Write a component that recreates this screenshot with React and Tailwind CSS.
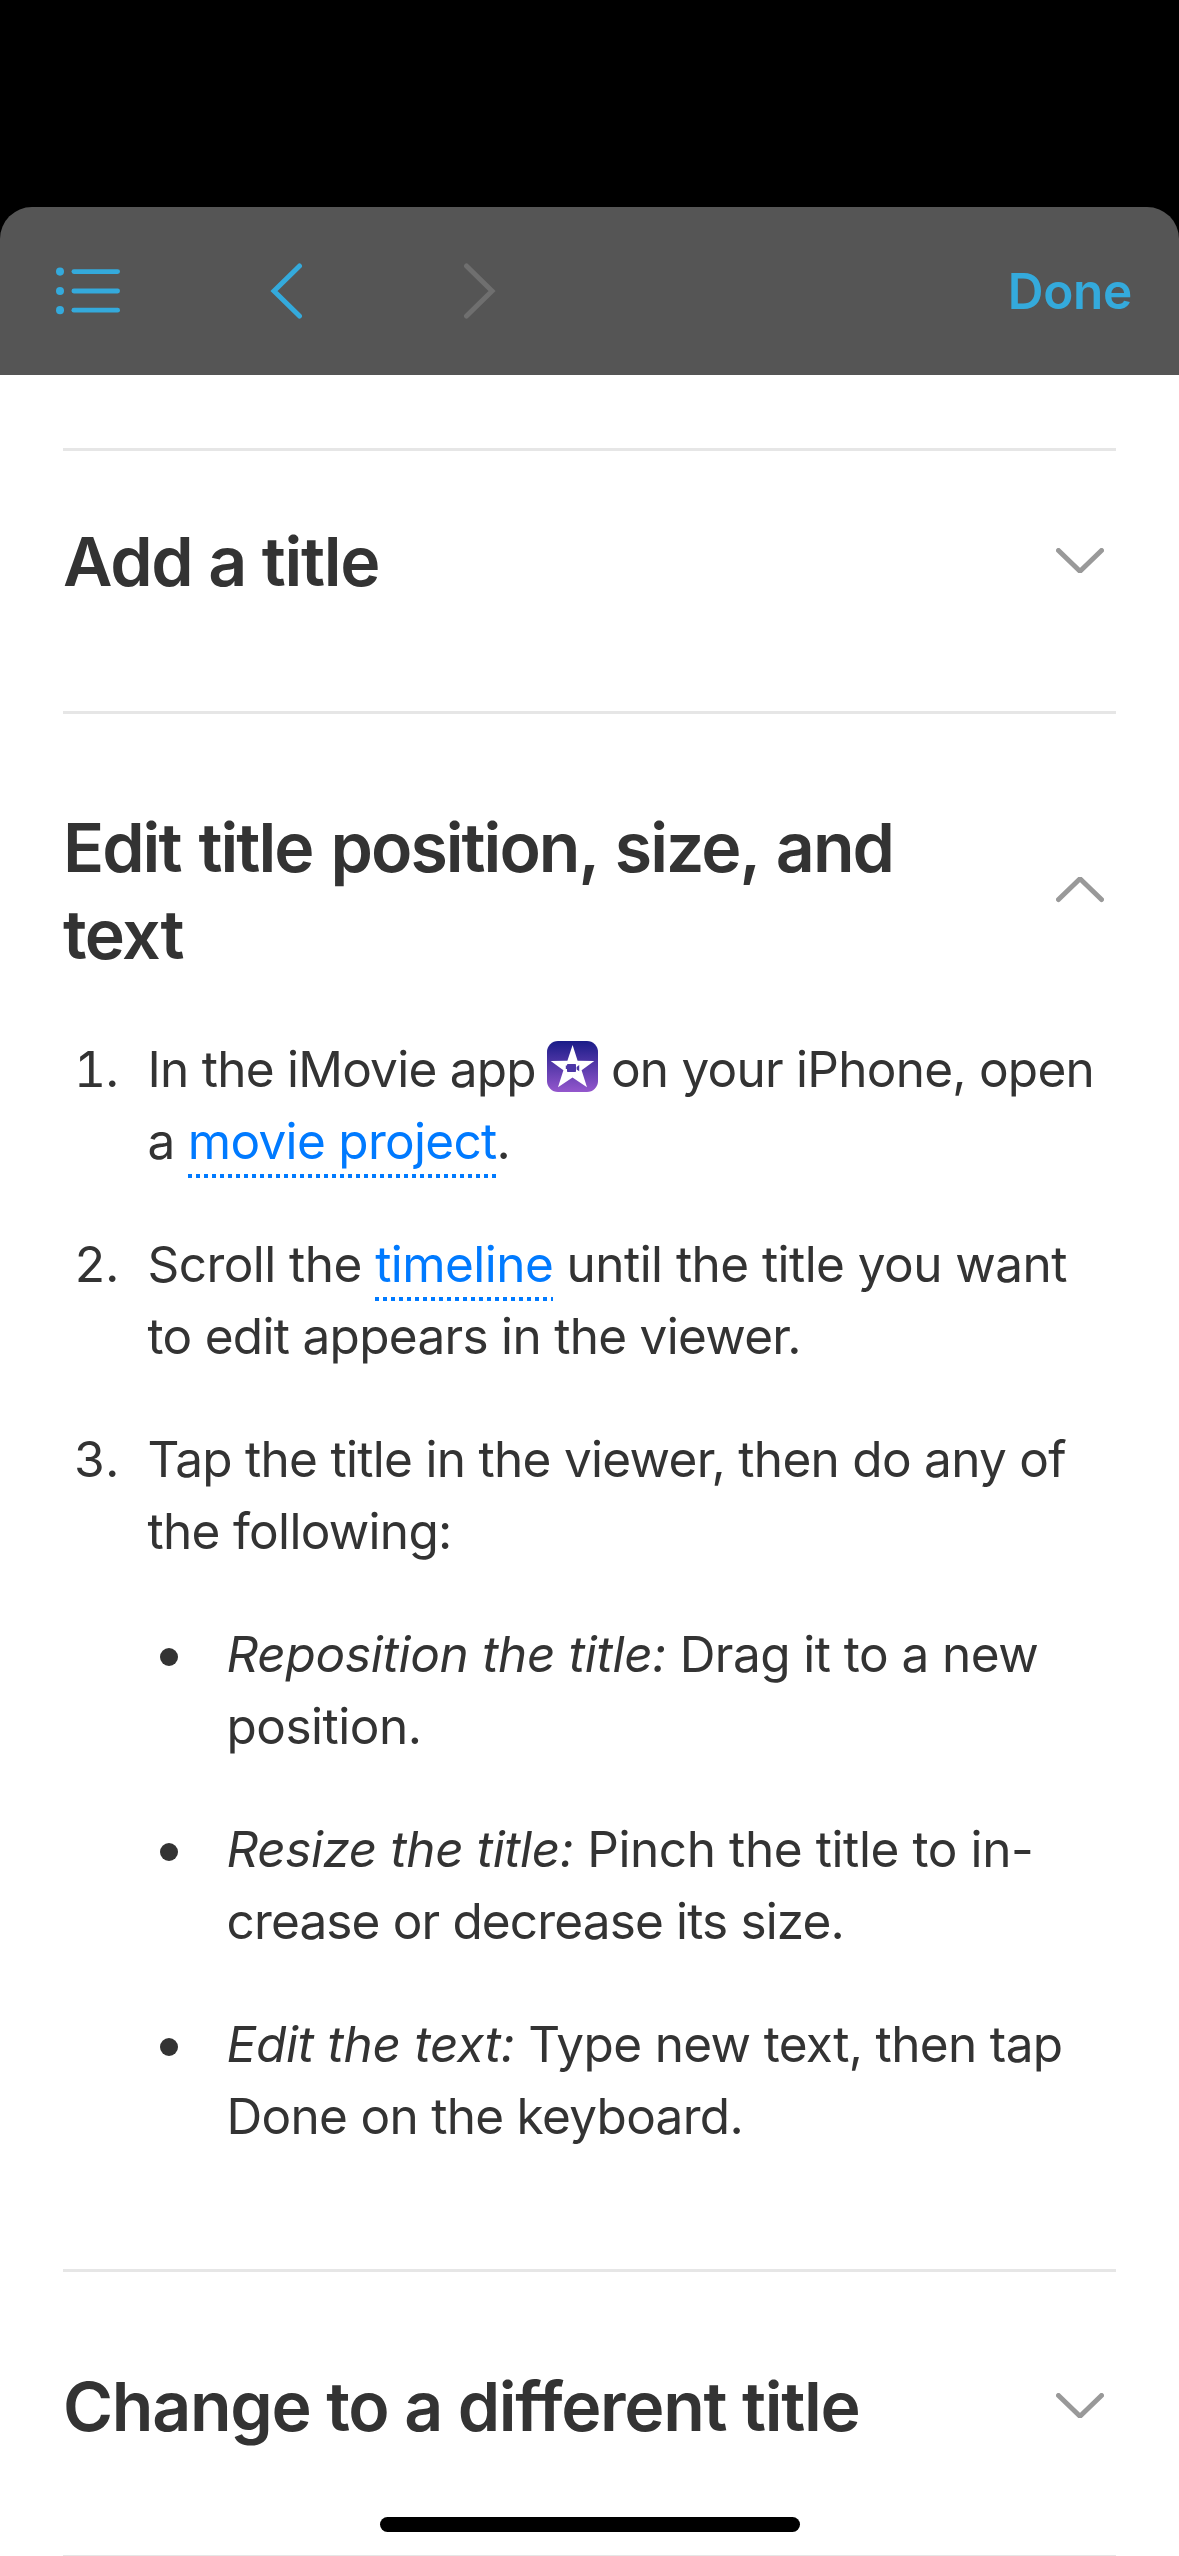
import React, { useState } from 'react';

/**
 * Chevron Component
 * Small gray arrow at the end of a section heading
 */
const Chevron = ({ open }) => (
  <svg
    width="48"
    height="26"
    viewBox="0 0 48 26"
    fill="none"
    stroke="#999999"
    strokeWidth="5"
    strokeLinecap="round"
    strokeLinejoin="bevel"
    className="mr-3 mb-0.5 shrink-0"
  >
    {open ? <path d="M2.5 22.5 L24 1.8 L45.5 22.5" /> : <path d="M2.5 2.5 L24 23.2 L45.5 2.5" />}
  </svg>
);

/**
 * MovieIcon Component
 * Inline app icon: white star with a camera on a purple gradient
 */
const MovieIcon = () => (
  <svg
    width="51"
    height="51"
    viewBox="0 0 51 51"
    className="mr-[13px] ml-[11px] inline-block align-[-5px]"
  >
    <defs>
      <linearGradient id="movie-bg" x1="0" y1="0" x2="0" y2="1">
        <stop offset="0" stopColor="#1a1c88" />
        <stop offset="1" stopColor="#9457cd" />
      </linearGradient>
    </defs>
    <rect width="51" height="51" rx="11" fill="url(#movie-bg)" />
    <path
      d="M25.6 4 L30.6 19.8 L47.3 20 L34.6 29.2 L40 46.3 L25.5 36.6 L11 46.3 L16.4 29.2 L3.7 20 L20.4 19.8 Z"
      fill="#ffffff"
    />
    <rect x="20" y="23" width="9" height="8" rx="0.8" fill="#4c35a6" />
    <path d="M18.8 24.5 h1.2 v3.4 h-1.2 Z M29.6 26 L32.2 24 V30.3 L29.6 28.4 Z" fill="#4c35a6" />
  </svg>
);

const Toolbar = () => (
  <header className="flex h-[168px] items-center rounded-t-[32px] bg-[#555555] pr-[47px] pl-[56px]">
    <button type="button" aria-label="Contents">
      <svg width="64" height="48" viewBox="0 0 64 48" fill="#34aadc">
        <ellipse cx="4" cy="4.6" rx="4" ry="4.1" />
        <ellipse cx="4" cy="24" rx="4" ry="4.1" />
        <ellipse cx="4" cy="43.2" rx="4" ry="4.1" />
        <rect x="15.5" y="2.2" width="48.5" height="4.8" rx="2.4" />
        <rect x="15.5" y="21.6" width="48.5" height="4.8" rx="2.4" />
        <rect x="15.5" y="40.8" width="48.5" height="4.8" rx="2.4" />
      </svg>
    </button>
    <button type="button" aria-label="Back" className="ml-[150px]">
      <svg width="34" height="56" viewBox="0 0 34 56" fill="none" stroke="#34aadc" strokeWidth="5" strokeLinecap="round">
        <path d="M29.5 3 L4 28 L29.5 53" />
      </svg>
    </button>
    <button type="button" aria-label="Forward" className="ml-[158px]">
      <svg width="34" height="56" viewBox="0 0 34 56" fill="none" stroke="#6f6f6f" strokeWidth="5" strokeLinecap="round">
        <path d="M4.5 3 L30 28 L4.5 53" />
      </svg>
    </button>
    <button type="button" className="ml-auto text-[49.5px] font-semibold tracking-[-0.3px] text-[#34aadc]">
      Done
    </button>
  </header>
);

/**
 * Section Component
 * Collapsible help topic
 */
const Section = ({ title, defaultOpen = false, className, children }) => {
  const [open, setOpen] = useState(defaultOpen);

  return (
    <section className={`border-t-3 border-[#e6e6e6] ${className}`}>
      <h2
        onClick={() => setOpen(!open)}
        className="flex items-center justify-between text-[68px] leading-[87px] font-semibold"
      >
        <span>{title}</span>
        <Chevron open={open} />
      </h2>
      {open && children}
    </section>
  );
};

const Line = ({ children, className = '' }) => (
  <span className={`block whitespace-nowrap ${className}`}>{children}</span>
);

const Link = ({ children }) => (
  <a
    href="#"
    className="bg-[linear-gradient(to_right,#007aff_50%,transparent_50%)] bg-[length:8px_4px] bg-bottom-left bg-repeat-x pb-[7px] text-[#007aff]"
  >
    {children}
  </a>
);

const Step = ({ number, children }) => (
  <li className="flex">
    <span className="w-[55px] shrink-0 text-right tabular-nums">{number}.</span>
    <div className="ml-[29.5px]">{children}</div>
  </li>
);

const Bullet = ({ children }) => (
  <li className="flex">
    <span className="mt-[30px] mr-[49px] ml-3 size-[18px] shrink-0 rounded-full bg-[#333333]" />
    <div>{children}</div>
  </li>
);

export default function App() {
  return (
    <div className="relative h-[2556px] w-[1179px] overflow-hidden bg-black pt-[207px] font-[Inter,sans-serif] text-[#333333]">
      <Toolbar />
      <main className="h-[2181px] bg-white px-[63px] pt-[73px]">
        <Section title={<Line className="tracking-[-1.3px]">Add a title</Line>} className="h-[263px] pt-[67px]" />

        <Section
          defaultOpen
          title={
            <>
              <Line className="tracking-[-2px] [word-spacing:3px]">Edit title position, size, and</Line>
              <Line className="tracking-[-1.5px]">text</Line>
            </>
          }
          className="h-[1558px] pt-[90px]"
        >
          <ol className="mt-[55px] flex flex-col gap-[51px] text-[49.5px] leading-[72px] tracking-[-0.7px]">
            <Step number={1}>
              <Line className="tracking-[-0.75px]">
                In the iMovie app
                <MovieIcon />
                on your iPhone, open
              </Line>
              <Line>
                a <Link>movie project</Link>.
              </Line>
            </Step>
            <Step number={2}>
              <Line className="tracking-[-0.55px]">
                Scroll the <Link>timeline</Link> until the title you want
              </Line>
              <Line>to edit appears in the viewer.</Line>
            </Step>
            <Step number={3}>
              <Line>Tap the title in the viewer, then do any of</Line>
              <Line>the following:</Line>
              <ul className="mt-[51px] flex flex-col gap-[51px]">
                <Bullet>
                  <Line className="tracking-[-0.55px]">
                    <em className="tracking-[-0.3px]">Reposition the title:</em> Drag it to a new
                  </Line>
                  <Line className="tracking-[-0.5px]">position.</Line>
                </Bullet>
                <Bullet>
                  <Line className="tracking-[-0.4px]">
                    <em>Resize the title:</em> Pinch the title to in-
                  </Line>
                  <Line className="tracking-[-0.85px]">crease or decrease its size.</Line>
                </Bullet>
                <Bullet>
                  <Line className="tracking-[-0.65px]">
                    <em className="tracking-[-0.25px]">Edit the text:</em> Type new text, then tap
                  </Line>
                  <Line>Done on the keyboard.</Line>
                </Bullet>
              </ul>
            </Step>
          </ol>
        </Section>

        <Section
          title={<Line className="tracking-[-1.3px]">Change to a different title</Line>}
          className="h-[286px] pt-[91px]"
        />
        <hr className="h-px border-0 bg-[#e6e6e6]" />
      </main>

      {/* home indicator */}
      <div className="absolute bottom-6 left-[380px] h-[15px] w-[420px] rounded-full bg-black" />
    </div>
  );
}
